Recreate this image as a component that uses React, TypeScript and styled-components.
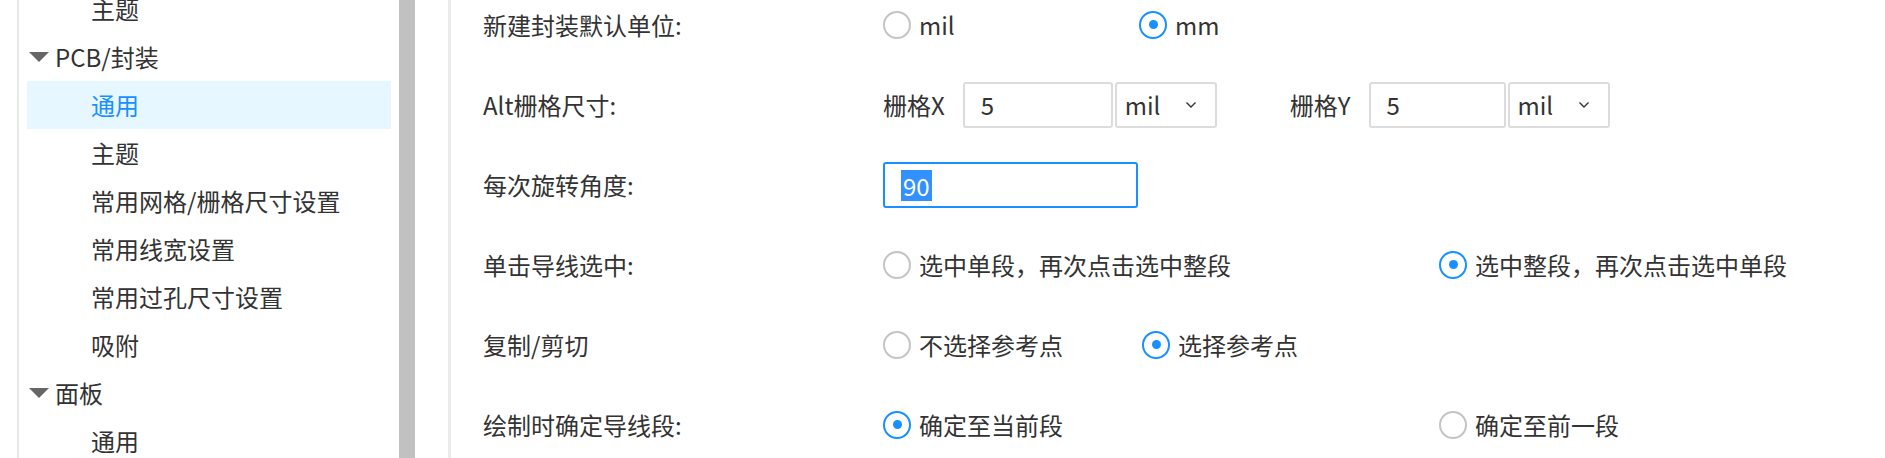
import React, { useLayoutEffect, useRef } from 'react';
import styled, { createGlobalStyle } from 'styled-components';

const GlobalStyle = createGlobalStyle`
  html, body {
    margin: 0;
    padding: 0;
    background: #ffffff;
  }
  body {
    font-family: "Noto Sans CJK SC", "Noto Sans", sans-serif;
    color: #333333;
  }
`;

const Page = styled.div`
  display: flex;
  height: 458px;
  overflow: hidden;
  background: #ffffff;
`;

/* ---------- left tree ---------- */

const Sidebar = styled.aside`
  display: flex;
  flex-shrink: 0;
  margin-left: 17px;
  margin-right: 33px;
  border-left: 2px solid #e8e8e8;
`;

const TreeViewport = styled.div`
  width: 364px;
  padding: 0 8px;
  overflow: hidden;
`;

const ScrollThumb = styled.div`
  width: 16px;
  background: #c1c1c1;
`;

const TreeItem = styled.div<{ $parent?: boolean; $active?: boolean }>`
  display: flex;
  align-items: center;
  height: 48px;
  padding-left: ${props => props.$parent ? '2px' : '64px'};
  font-size: 24px;
  line-height: 1.2;
  white-space: nowrap;
  color: ${props => props.$active ? '#1890ff' : '#333333'};
  background-color: ${props => props.$active ? '#e6f7ff' : 'transparent'};
`;

const Caret = styled.span`
  width: 0;
  height: 0;
  border-left: 10px solid transparent;
  border-right: 10px solid transparent;
  border-top: 10px solid #666666;
  margin-right: 6px;
`;

/* ---------- settings form ---------- */

const Main = styled.main`
  flex: 1;
  border-left: 3px solid #ebebeb;
  padding-left: 32px;
  overflow: hidden;
`;

const Row = styled.div`
  display: flex;
  align-items: center;
  height: 80px;
  font-size: 24px;
  line-height: 1.2;
  white-space: nowrap;
`;

const Label = styled.div`
  width: 400px;
  flex-shrink: 0;
`;

const Option = styled.label<{ $width: number }>`
  display: flex;
  align-items: center;
  width: ${props => props.$width}px;
  flex-shrink: 0;
`;

const RadioMark = styled.span<{ $checked: boolean }>`
  box-sizing: border-box;
  width: 28px;
  height: 28px;
  border-radius: 50%;
  border: 2px solid ${props => props.$checked ? '#1890ff' : '#c4c4c4'};
  display: flex;
  align-items: center;
  justify-content: center;
  margin-right: 8px;
  flex-shrink: 0;

  &::after {
    content: '';
    width: 9px;
    height: 9px;
    border-radius: 50%;
    background: #1890ff;
    display: ${props => props.$checked ? 'block' : 'none'};
  }
`;

const FieldGroup = styled.div<{ $gapAfter?: number }>`
  display: flex;
  align-items: center;
  margin-right: ${props => props.$gapAfter || 0}px;
`;

const FieldCaption = styled.span`
  margin-right: 18px;
`;

const InputBox = styled.div<{ $width: number; $focused?: boolean }>`
  box-sizing: border-box;
  display: flex;
  align-items: center;
  width: ${props => props.$width}px;
  height: 46px;
  padding-left: 16px;
  border: 2px solid ${props => props.$focused ? '#1890ff' : '#dcdcdc'};
  border-radius: 3px;
  color: #333333;
`;

const Selected = styled.span`
  display: inline-block;
  line-height: 31px;
  padding: 0 2px;
  background: #3390ff;
  color: #ffffff;
`;

const SelectBox = styled.div`
  box-sizing: border-box;
  display: flex;
  align-items: center;
  justify-content: space-between;
  width: 102px;
  height: 46px;
  margin-left: 2px;
  padding: 0 18px 0 8px;
  border: 2px solid #dcdcdc;
  border-radius: 3px;
`;

function Chevron() {
  return (
    <svg width="12" height="8" viewBox="0 0 12 8">
      <polyline points="1.5,1.5 6,6 10.5,1.5" fill="none" stroke="#333" strokeWidth="1.4" />
    </svg>
  );
}

function Radio({ checked, text, width }: { checked: boolean; text: string; width: number }) {
  return (
    <Option $width={width}>
      <RadioMark $checked={checked} />
      {text}
    </Option>
  );
}

const tree = [
  { text: '主题' },
  { text: 'PCB/封装', parent: true },
  { text: '通用', active: true },
  { text: '主题' },
  { text: '常用网格/栅格尺寸设置' },
  { text: '常用线宽设置' },
  { text: '常用过孔尺寸设置' },
  { text: '吸附' },
  { text: '面板', parent: true },
  { text: '通用' },
];

function App() {
  const treeRef = useRef<HTMLDivElement>(null);
  const mainRef = useRef<HTMLElement>(null);

  useLayoutEffect(() => {
    // both panes are scrolled down a little in the shot
    if (treeRef.current) treeRef.current.scrollTop = 15;
    if (mainRef.current) mainRef.current.scrollTop = 15;
  }, []);

  return (
    <>
      <GlobalStyle />
      <Page>
        <Sidebar>
          <TreeViewport ref={treeRef}>
            {tree.map((item, i) => (
              <TreeItem key={i} $parent={item.parent} $active={item.active}>
                {item.parent && <Caret />}
                {item.text}
              </TreeItem>
            ))}
          </TreeViewport>
          <ScrollThumb />
        </Sidebar>

        <Main ref={mainRef}>
          <Row>
            <Label>新建封装默认单位:</Label>
            <Radio checked={false} text="mil" width={256} />
            <Radio checked={true} text="mm" width={256} />
          </Row>
          <Row>
            <Label>Alt栅格尺寸:</Label>
            <FieldGroup $gapAfter={73}>
              <FieldCaption>栅格X</FieldCaption>
              <InputBox $width={150}>5</InputBox>
              <SelectBox>mil<Chevron /></SelectBox>
            </FieldGroup>
            <FieldGroup>
              <FieldCaption>栅格Y</FieldCaption>
              <InputBox $width={137}>5</InputBox>
              <SelectBox>mil<Chevron /></SelectBox>
            </FieldGroup>
          </Row>
          <Row>
            <Label>每次旋转角度:</Label>
            <InputBox $width={255} $focused>
              <Selected>90</Selected>
            </InputBox>
          </Row>
          <Row>
            <Label>单击导线选中:</Label>
            <Radio checked={false} text="选中单段，再次点击选中整段" width={556} />
            <Radio checked={true} text="选中整段，再次点击选中单段" width={556} />
          </Row>
          <Row>
            <Label>复制/剪切</Label>
            <Radio checked={false} text="不选择参考点" width={259} />
            <Radio checked={true} text="选择参考点" width={259} />
          </Row>
          <Row>
            <Label>绘制时确定导线段:</Label>
            <Radio checked={true} text="确定至当前段" width={556} />
            <Radio checked={false} text="确定至前一段" width={556} />
          </Row>
        </Main>
      </Page>
    </>
  );
}

export default App;
